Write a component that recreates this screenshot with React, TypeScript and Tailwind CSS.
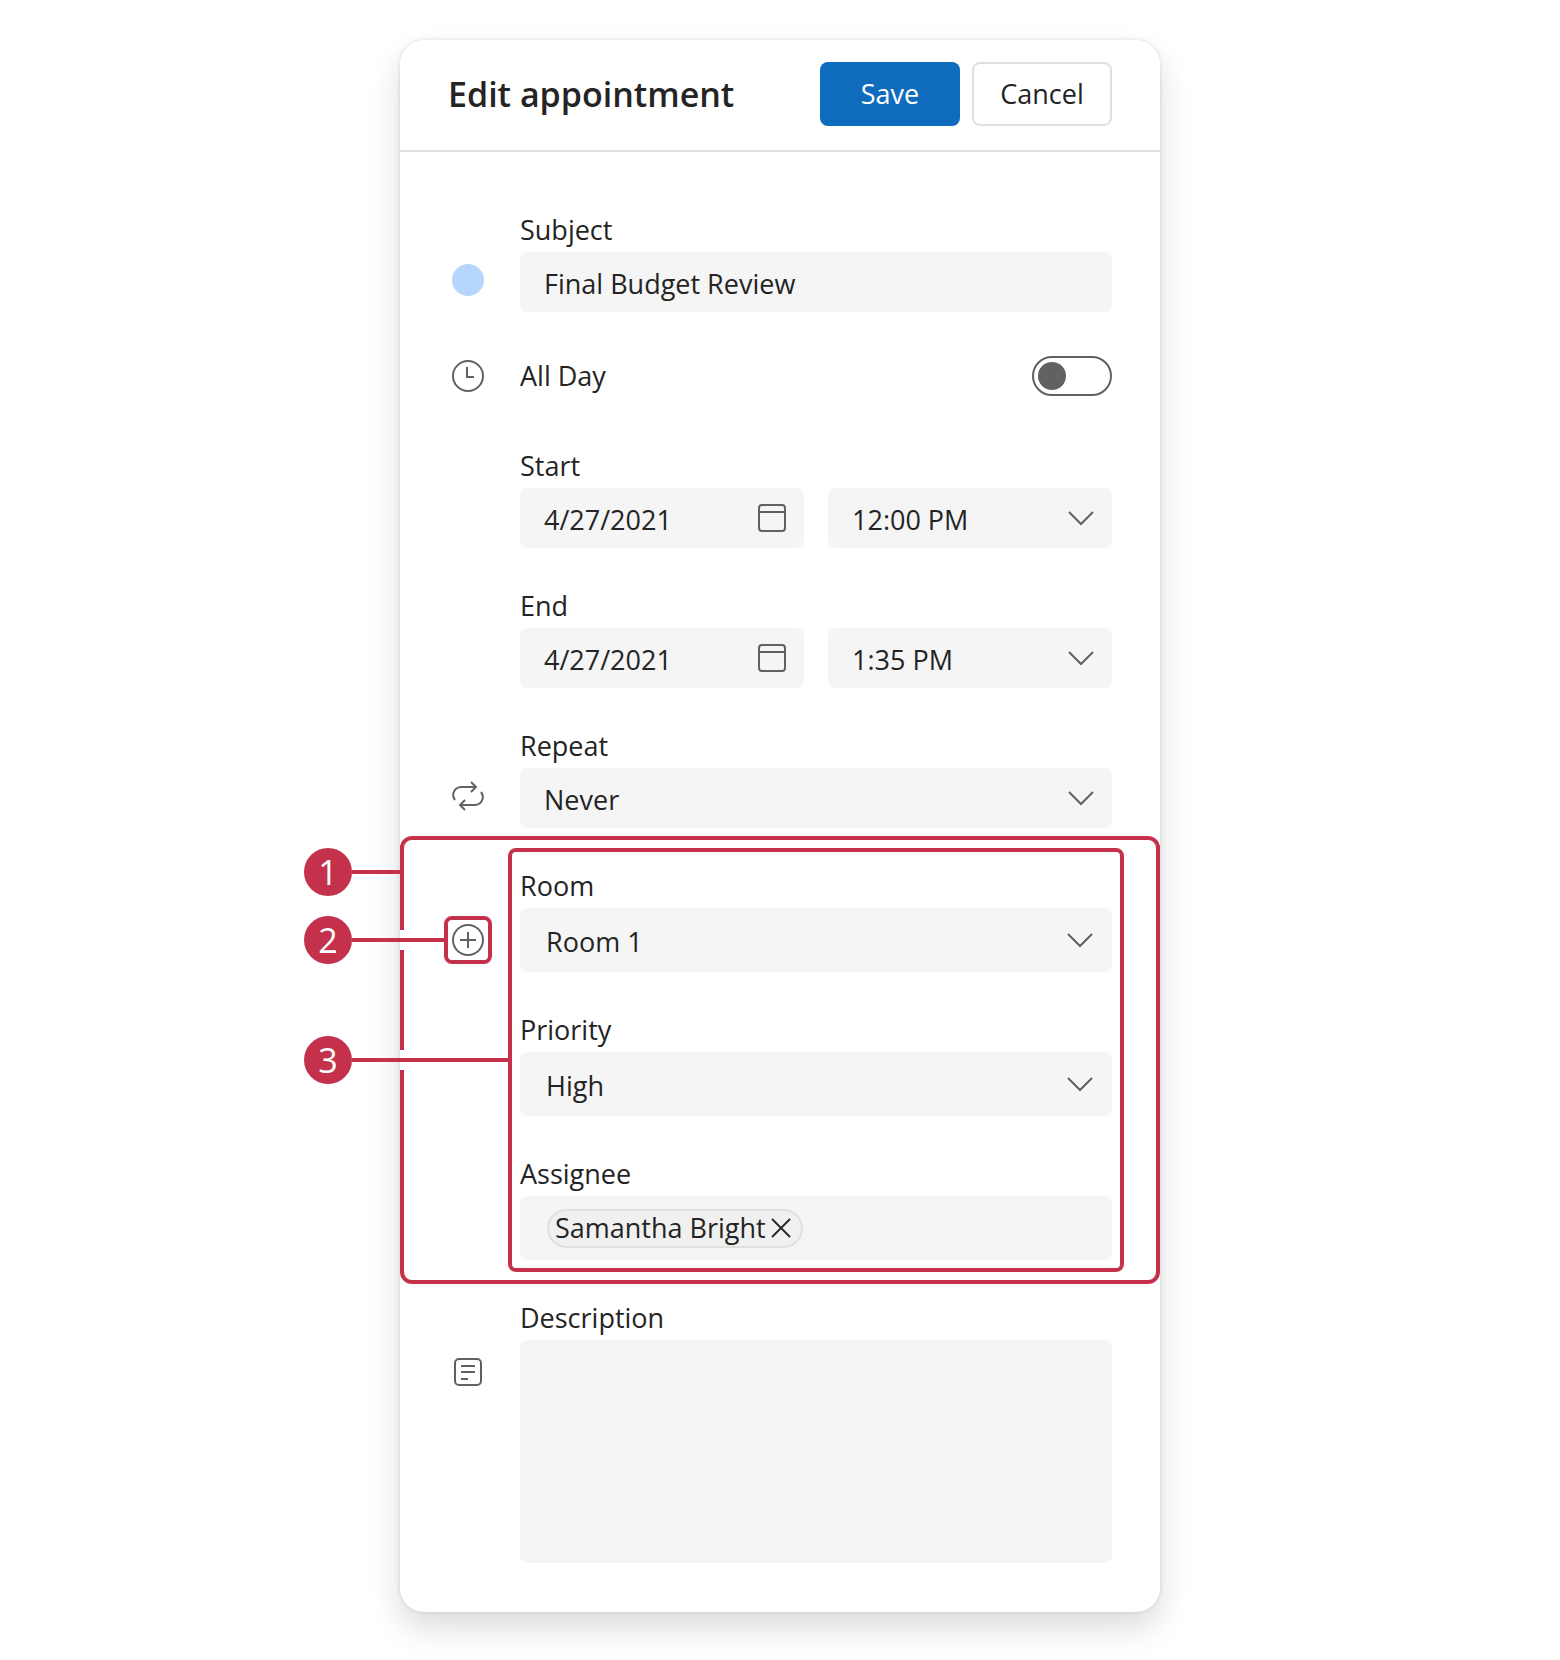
import React from "react";

const ink = "#616161";

function Chevron() {
  return (
    <svg width="26" height="16" viewBox="0 0 26 16" fill="none" className="shrink-0">
      <path d="M1 2l12 12L25 2" stroke={ink} strokeWidth="2" />
    </svg>
  );
}
function CalendarIcon() {
  return (
    <svg width="28" height="28" viewBox="0 0 28 28" fill="none" className="shrink-0">
      <rect x="1" y="1" width="26" height="26" rx="3" stroke={ink} strokeWidth="2" />
      <path d="M1 8h26" stroke={ink} strokeWidth="2" />
    </svg>
  );
}
function ClockIcon() {
  return (
    <svg width="32" height="32" viewBox="0 0 32 32" fill="none">
      <circle cx="16" cy="16" r="15" stroke={ink} strokeWidth="2" />
      <path d="M15 7v10h7" stroke={ink} strokeWidth="2" />
    </svg>
  );
}
function RepeatIcon() {
  return (
    <svg width="32" height="32" viewBox="0 0 32 32" fill="none">
      <path d="M19 2l5 5-5 5M23 7H9a8 8 0 0 0-6 13M13 30l-5-5 5-5M9 25h14a8 8 0 0 0 6-13" stroke={ink} strokeWidth="2" />
    </svg>
  );
}
function PlusIcon() {
  return (
    <svg width="32" height="32" viewBox="0 0 32 32" fill="none">
      <circle cx="16" cy="16" r="15" stroke={ink} strokeWidth="2" />
      <path d="M16 8v16M8 16h16" stroke={ink} strokeWidth="2" />
    </svg>
  );
}
function NotesIcon() {
  return (
    <svg width="32" height="32" viewBox="0 0 32 32" fill="none">
      <rect x="3" y="3" width="26" height="26" rx="4" stroke={ink} strokeWidth="2" />
      <path d="M9 10h14M9 16h14M9 23h7" stroke={ink} strokeWidth="2" />
    </svg>
  );
}

function Label({ children }: { children: React.ReactNode }) {
  return <div className="h-10 text-[27px] leading-[36px] text-[#242424]">{children}</div>;
}

function Box({
  children,
  tall,
  right,
  className = "",
}: {
  children: React.ReactNode;
  tall?: boolean;
  right?: React.ReactNode;
  className?: string;
}) {
  return (
    <div
      className={`flex items-center justify-between rounded-lg bg-[#f5f5f5] text-[27px] text-[#242424] ${
        tall ? "h-16 pl-[26px] pr-[19px]" : "h-[60px] pl-6 pr-[18px]"
      } ${className}`}
    >
      <span className="leading-[36px] pt-[4px]">{children}</span>
      {right}
    </div>
  );
}

function Row({
  icon,
  align = "end",
  children,
}: {
  icon?: React.ReactNode;
  align?: "end" | "group";
  children: React.ReactNode;
}) {
  return (
    <div className={`flex gap-9 ${align === "end" ? "items-end" : "items-start"}`}>
      <div className={`flex h-8 w-8 shrink-0 items-center justify-center ${align === "end" ? "mb-4" : "mt-14"}`}>
        {icon}
      </div>
      <div className="min-w-0 flex-1">{children}</div>
    </div>
  );
}

function Badge({ n, className }: { n: number; className: string }) {
  return (
    <div
      className={`absolute left-[-96px] flex h-12 w-12 items-center justify-center rounded-full bg-[#c4314b] text-[34px] leading-none text-white ${className}`}
    >
      {n}
    </div>
  );
}

export default function App() {
  return (
    <div
      className="flex min-h-[1660px] justify-center bg-white pt-10"
      style={{ fontFamily: '"Open Sans", "Noto Sans", sans-serif' }}
    >
      <div className="relative h-[1572px] w-[760px] rounded-3xl bg-white shadow-[0_0_4px_rgba(0,0,0,0.12),0_16px_32px_rgba(0,0,0,0.14)]">
        <header className="flex h-[112px] items-center justify-between border-b-2 border-[#e0e0e0] px-12 pb-[2px]">
          <h1 className="text-[34px] font-semibold text-[#242424]">Edit appointment</h1>
          <div className="flex gap-3">
            <button className="flex h-16 w-[140px] items-center justify-center rounded-lg bg-[#0f6cbd] text-[27px] font-medium text-white">
              Save
            </button>
            <button className="flex h-16 w-[140px] items-center justify-center rounded-lg border-2 border-[#e0e0e0] bg-white text-[27px] font-medium text-[#242424]">
              Cancel
            </button>
          </div>
        </header>

        <div className="flex flex-col gap-10 pl-[52px] pr-12 pt-[60px]">
          <Row icon={<span className="block h-8 w-8 rounded-full bg-[#b4d6fa]" />}>
            <Label>Subject</Label>
            <Box>Final Budget Review</Box>
          </Row>

          <div className="mb-3 mt-1 flex h-10 items-center gap-9">
            <div className="h-8 w-8 shrink-0">
              <ClockIcon />
            </div>
            <div className="flex flex-1 items-center justify-between">
              <span className="text-[27px] text-[#242424]">All Day</span>
              <div className="flex h-10 w-20 items-center rounded-full border-2 border-[#616161] pl-1">
                <span className="h-7 w-7 rounded-full bg-[#616161]" />
              </div>
            </div>
          </div>

          <Row>
            <Label>Start</Label>
            <div className="grid grid-cols-2 gap-6">
              <Box right={<CalendarIcon />}>4/27/2021</Box>
              <Box right={<Chevron />}>12:00 PM</Box>
            </div>
          </Row>

          <Row>
            <Label>End</Label>
            <div className="grid grid-cols-2 gap-6">
              <Box right={<CalendarIcon />}>4/27/2021</Box>
              <Box right={<Chevron />}>1:35 PM</Box>
            </div>
          </Row>

          <Row icon={<RepeatIcon />}>
            <Label>Repeat</Label>
            <Box right={<Chevron />}>Never</Box>
          </Row>

          <Row icon={<PlusIcon />} align="group">
            <div className="flex flex-col gap-10">
              <div>
                <Label>Room</Label>
                <Box tall right={<Chevron />}>Room 1</Box>
              </div>
              <div>
                <Label>Priority</Label>
                <Box tall right={<Chevron />}>High</Box>
              </div>
              <div>
                <Label>Assignee</Label>
                <div className="flex h-16 items-center rounded-lg bg-[#f5f5f5] pl-[27px]">
                  <div className="flex h-[39px] w-[256px] items-center justify-between rounded-full border-2 border-[#e0e0e0] bg-[#f0f0f0] pl-[6px] pr-[10px] text-[27px] text-[#242424]">
                    <span>Samantha Bright</span>
                    <svg width="20" height="20" viewBox="0 0 20 20" fill="none" className="shrink-0">
                      <path d="M1 1l18 18M19 1L1 19" stroke="#242424" strokeWidth="1.8" />
                    </svg>
                  </div>
                </div>
              </div>
            </div>
          </Row>

          <Row icon={<NotesIcon />} align="group">
            <Label>Description</Label>
            <div className="h-[223px] rounded-lg bg-[#f5f5f5]" />
          </Row>
        </div>

        {/* Annotation overlay */}
        <div className="pointer-events-none absolute left-0 top-[796px] h-[448px] w-[760px] rounded-xl border-4 border-[#c4314b]" />
        <div className="pointer-events-none absolute left-[108px] top-[808px] h-[424px] w-[616px] rounded-lg border-4 border-[#c4314b]" />
        <div className="pointer-events-none absolute left-[44px] top-[876px] h-12 w-12 rounded-lg border-4 border-[#c4314b]" />

        <div className="absolute left-0 top-[890px] h-5 w-1 bg-white" />
        <div className="absolute left-0 top-[1010px] h-5 w-1 bg-white" />

        <div className="absolute left-[-48px] top-[830px] h-1 w-[48px] bg-[#c4314b]" />
        <div className="absolute left-[-48px] top-[898px] h-1 w-[92px] bg-[#c4314b]" />
        <div className="absolute left-[-48px] top-[1018px] h-1 w-[156px] bg-[#c4314b]" />

        <Badge n={1} className="top-[808px]" />
        <Badge n={2} className="top-[876px]" />
        <Badge n={3} className="top-[996px]" />
      </div>
    </div>
  );
}
